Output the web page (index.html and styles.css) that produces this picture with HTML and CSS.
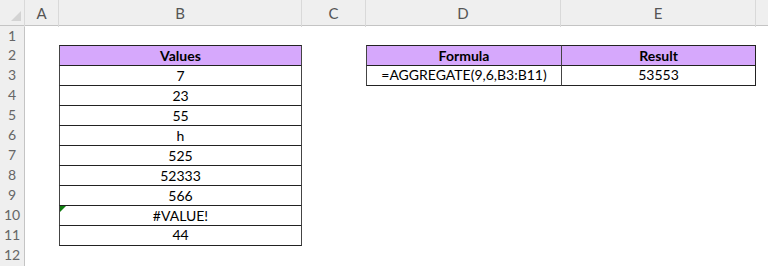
FILE: index.html
```html
<!doctype html>
<html>
    <head>
        <title>Sheet1</title>
        <meta charset="utf-8" />
        <link rel="stylesheet" href="styles.css">
    </head>
    <body>
        <div id="sheet">
            <div class="row colhead">
                <div class="corner"><span class="selall"></span></div>
                <div>A</div><div>B</div><div>C</div><div>D</div><div>E</div><div></div>
            </div>
            <div class="row first">
                <div class="rh">1</div><div></div><div></div><div></div><div></div><div></div><div></div>
            </div>
            <div class="row">
                <div class="rh">2</div><div></div>
                <div class="cell head">Values</div><div></div>
                <div class="cell head">Formula</div>
                <div class="cell head lastcol">Result</div><div></div>
            </div>
            <div class="row">
                <div class="rh">3</div><div></div>
                <div class="cell">7</div><div></div>
                <div class="cell lastrow">=AGGREGATE(9,6,B3:B11)</div>
                <div class="cell lastrow lastcol">53553</div><div></div>
            </div>
            <div class="row">
                <div class="rh">4</div><div></div><div class="cell">23</div><div></div><div></div><div></div><div></div>
            </div>
            <div class="row">
                <div class="rh">5</div><div></div><div class="cell">55</div><div></div><div></div><div></div><div></div>
            </div>
            <div class="row">
                <div class="rh">6</div><div></div><div class="cell">h</div><div></div><div></div><div></div><div></div>
            </div>
            <div class="row">
                <div class="rh">7</div><div></div><div class="cell">525</div><div></div><div></div><div></div><div></div>
            </div>
            <div class="row">
                <div class="rh">8</div><div></div><div class="cell">52333</div><div></div><div></div><div></div><div></div>
            </div>
            <div class="row">
                <div class="rh">9</div><div></div><div class="cell">566</div><div></div><div></div><div></div><div></div>
            </div>
            <div class="row">
                <div class="rh">10</div><div></div><div class="cell flagged">#VALUE!</div><div></div><div></div><div></div><div></div>
            </div>
            <div class="row">
                <div class="rh">11</div><div></div><div class="cell lastrow">44</div><div></div><div></div><div></div><div></div>
            </div>
            <div class="row">
                <div class="rh">12</div><div></div><div></div><div></div><div></div><div></div><div></div>
            </div>
            <div class="row tail">
                <div class="rh"></div><div></div><div></div><div></div><div></div><div></div><div></div>
            </div>
        </div>
    </body>
</html>
```

FILE: styles.css
```css
html, body {
    margin: 0px;
    padding: 0px;
    background-color: white;
}

body {
    font-family: Lato, "Liberation Sans", sans-serif;
    font-size: 14px;
    color: black;
    overflow: hidden;
}

#sheet {
    width: 768px;
    height: 266px;
    overflow: hidden;
}

.row {
    display: grid;
    grid-template-columns: 25px 34px 243px 64px 195px 195px 1fr;
    height: 20px;
}

.row > div {
    box-sizing: border-box;
}

/* column letters */
.colhead {
    height: 26px;
    background-color: #efefef;
    border-bottom: 1px solid #c4c4c4;
    box-sizing: border-box;
    color: #555;
    font-size: 15px;
}

.colhead > div {
    border-right: 1px solid #d9d9d9;
    text-align: center;
    line-height: 27px;
}

.colhead > div:last-child {
    border-right: none;
}

.corner {
    position: relative;
}

.selall {
    position: absolute;
    left: 11px;
    top: 11px;
    width: 0;
    height: 0;
    border-left: 10px solid transparent;
    border-bottom: 10px solid #d3d3d3;
}

.first {
    height: 19px;
}

.tail {
    height: 2px;
}

/* row numbers */
.rh {
    background-color: #efefef;
    border-right: 1px solid #c4c4c4;
    border-bottom: 1px solid #dcdcdc;
    color: #666;
    text-align: center;
    line-height: 20px;
    font-size: 14px;
}

.first .rh {
    line-height: 19px;
}

/* bordered cells */
.cell {
    border-top: 1px solid #222;
    border-left: 1px solid #444;
    border-right: 1px solid #444;
    text-align: center;
    line-height: 19px;
    position: relative;
}

.cell + div + .cell {
    border-right: none;
}

.cell.lastcol {
    border-right: 1px solid #222;
}

.cell.lastrow {
    border-bottom: 1px solid #222;
    line-height: 18px;
}

.head {
    background-color: #d6a8fc;
    font-weight: bold;
}

.flagged::before {
    content: "";
    position: absolute;
    left: 0;
    top: 0;
    border-top: 6px solid #107c10;
    border-right: 6px solid transparent;
}
```
